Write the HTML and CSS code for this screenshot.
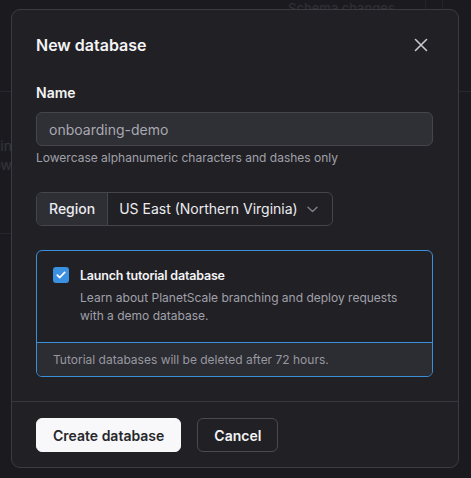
FILE: index.html
```html
<!DOCTYPE html>
<html lang="en">
<head>
<meta charset="utf-8">
<title>New database</title>
<link rel="stylesheet" href="styles.css">
</head>
<body>
<div class="page">
  <header class="page-head">
    <nav class="tabs">
      <span class="tab">Schema changes</span>
      <span class="tab tab-gap"></span>
      <span class="tab tab-last">Deploy</span>
    </nav>
  </header>
  <section class="page-body">
    <div class="side">
      <span class="side-line">Admin</span>
      <span class="side-line">Overflow</span>
    </div>
  </section>
</div>

<div class="modal" role="dialog" aria-labelledby="modal-title">
  <div class="modal-body">
    <div class="modal-head">
      <h2 id="modal-title" class="modal-title">New database</h2>
      <button class="close" aria-label="Close">
        <svg width="14" height="14" viewBox="0 0 14 14" fill="none" stroke="currentColor" stroke-width="1.6" stroke-linecap="round"><path d="M1.5 1.5l11 11M12.5 1.5l-11 11"/></svg>
      </button>
    </div>

    <label class="field-label" for="dbname">Name</label>
    <input id="dbname" class="input" type="text" value="onboarding-demo">
    <p class="help">Lowercase alphanumeric characters and dashes only</p>

    <div class="region">
      <span class="region-addon">Region</span>
      <span class="region-select">US East (Northern Virginia)
        <svg class="chev" width="11" height="7" viewBox="0 0 11 7" fill="none" stroke="currentColor" stroke-width="1.4" stroke-linecap="round" stroke-linejoin="round"><path d="M1 1.2l4.5 4.3L10 1.2"/></svg>
      </span>
    </div>

    <div class="tutorial">
      <div class="tutorial-main">
        <span class="check">
          <svg width="10" height="8" viewBox="0 0 10 8" fill="none" stroke="#fff" stroke-width="1.8" stroke-linecap="round" stroke-linejoin="round"><path d="M1.3 4.2l2.5 2.3L8.7 1.4"/></svg>
        </span>
        <div class="tutorial-text">
          <div class="tutorial-title">Launch tutorial database</div>
          <div class="tutorial-desc">Learn about PlanetScale branching and deploy requests with a demo database.</div>
        </div>
      </div>
      <div class="tutorial-foot">Tutorial databases will be deleted after 72 hours.</div>
    </div>
  </div>

  <div class="modal-foot">
    <button class="btn btn-primary">Create database</button>
    <button class="btn btn-secondary">Cancel</button>
  </div>
</div>
</body>
</html>
```

FILE: styles.css
```css
* { box-sizing: border-box; }

html, body {
  margin: 0;
  padding: 0;
}

body {
  width: 471px;
  height: 478px;
  overflow: hidden;
  background: #1b1b1f;
  font-family: Inter, "Noto Sans", sans-serif;
  color: #f4f4f5;
  position: relative;
}

/* background page (dimmed) */
.page {
  height: 100%;
  overflow: hidden;
}

.page-head {
  height: 92px;
  border-bottom: 1px solid #27272d;
  overflow: hidden;
}

.tabs {
  display: flex;
  padding-left: 288px;
}

.tab {
  font-size: 13px;
  line-height: 16px;
  color: #2f2f35;
  font-weight: 500;
  padding-right: 30px;
  border-right: 1px solid #242429;
  height: 22px;
  white-space: nowrap;
  flex: none;
}

.tab-gap {
  width: 17px;
  padding: 0;
}

.tab-last {
  border-right: 0;
  padding-left: 33px;
}

.page-body {
  padding-top: 44px;
}

.side {
  width: 11px;
  overflow: hidden;
  display: flex;
  flex-direction: column;
  align-items: flex-end;
  border-bottom: 1px solid #25252b;
  padding-bottom: 59px;
}

.side-line {
  white-space: nowrap;
  font-size: 14px;
  line-height: 19px;
  color: #36363c;
  margin-left: -100px;
  margin-right: -1px;
}

/* modal */
.modal {
  position: absolute;
  left: 11px;
  top: 9px;
  width: 448px;
  height: 459px;
  background: #202025;
  border: 1px solid #3b3b42;
  border-radius: 9px;
  display: flex;
  flex-direction: column;
}

.modal-body {
  padding: 23px 25px 24px 24px;
  border-bottom: 1px solid #37373e;
}

.modal-head {
  display: flex;
  align-items: center;
  justify-content: space-between;
  height: 24px;
  margin-bottom: 26px;
}

.modal-title {
  margin: 0;
  font-size: 16px;
  line-height: 24px;
  font-weight: 600;
  color: #f4f4f5;
}

.close {
  background: none;
  border: 0;
  padding: 0;
  margin-right: 5px;
  width: 14px;
  height: 14px;
  color: #c8c8cf;
  display: flex;
}

.field-label {
  display: block;
  font-size: 14px;
  line-height: 20px;
  font-weight: 600;
  color: #f4f4f5;
  margin-bottom: 9px;
}

.input {
  display: block;
  width: 100%;
  height: 34px;
  margin: 0;
  padding: 0 12px;
  background: #2f2f36;
  border: 1px solid #45454c;
  border-radius: 6px;
  font-family: inherit;
  font-size: 14px;
  color: #a9a9b1;
  outline: none;
}

.help {
  margin: 4px 0 0;
  font-size: 12px;
  line-height: 16px;
  color: #a1a1aa;
}

.region {
  display: inline-flex;
  height: 34px;
  margin-top: 26px;
  border: 1px solid #45454c;
  border-radius: 6px;
  overflow: hidden;
  font-size: 14px;
  line-height: 20px;
}

.region-addon {
  display: flex;
  align-items: center;
  padding: 0 12px;
  background: #2e2e35;
  border-right: 1px solid #45454c;
  color: #ececef;
  font-weight: 500;
}

.region-select {
  display: flex;
  align-items: center;
  gap: 9px;
  padding: 0 14px 0 11px;
  color: #ececef;
}

.chev {
  color: #7f7f88;
}

.tutorial {
  margin-top: 24px;
  border: 1px solid #3b8ed8;
  border-radius: 6px;
  overflow: hidden;
}

.tutorial-main {
  display: flex;
  gap: 11px;
  padding: 16px 16px 17px 16px;
}

.check {
  flex: none;
  width: 16px;
  height: 16px;
  border-radius: 3px;
  background: #3b90e2;
  display: flex;
  align-items: center;
  justify-content: center;
}

.tutorial-title {
  font-size: 12.5px;
  letter-spacing: -0.2px;
  line-height: 18px;
  font-weight: 600;
  color: #f4f4f5;
}

.tutorial-desc {
  margin-top: 4px;
  font-size: 12px;
  line-height: 18px;
  color: #a1a1aa;
}

.tutorial-foot {
  border-top: 1px solid #3b8ed8;
  background: #2c2c33;
  padding: 8px 16px 8px;
  font-size: 12px;
  line-height: 17px;
  color: #98989f;
}

.modal-foot {
  display: flex;
  gap: 16px;
  padding: 16px 24px;
}

.btn {
  height: 34px;
  border-radius: 6px;
  font-family: inherit;
  font-size: 14px;
  font-weight: 600;
  padding: 0 16px;
  cursor: pointer;
}

.btn-primary {
  background: #f8f8fa;
  border: 1px solid #f8f8fa;
  color: #27272b;
}

.btn-secondary {
  background: transparent;
  border: 1px solid #4a4a51;
  color: #f4f4f5;
}
```
